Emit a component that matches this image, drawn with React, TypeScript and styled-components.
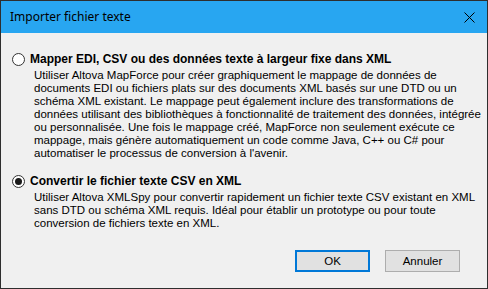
import React from "react";
import styled, { createGlobalStyle } from "styled-components";

const Global = createGlobalStyle`
  html, body { margin: 0; padding: 0; background: #ffffff; }
  * { box-sizing: border-box; }
`;

const Window = styled.div`
  width: 488px;
  height: 289px;
  border: 1px solid #2e2e2e;
  background: #f0f0f0;
  display: flex;
  flex-direction: column;
  overflow: hidden;
`;

const TitleBar = styled.div`
  height: 32px;
  background: #28a6f1;
  display: flex;
  align-items: center;
  justify-content: space-between;
  padding: 0 12px 0 9px;
  font-family: "Noto Sans", "Open Sans", sans-serif;
  font-size: 12px;
  color: #000;
`;

const Title = styled.span`
  line-height: 1;
`;

const Body = styled.div`
  flex: 1;
  display: flex;
  flex-direction: column;
  padding: 20px 0 0 11px;
  font-family: "Liberation Sans", Arial, sans-serif;
  color: #000;
`;

const Option = styled.div<{ $gap: number }>`
  display: flex;
  flex-direction: column;
  margin-bottom: ${(p) => p.$gap}px;
`;

const OptionRow = styled.label`
  display: flex;
  align-items: center;
  gap: 5px;
  height: 13px;
`;

const Radio = styled.span<{ $checked?: boolean }>`
  width: 13px;
  height: 13px;
  border-radius: 50%;
  border: 1px solid #333333;
  background: #ffffff;
  display: flex;
  align-items: center;
  justify-content: center;
  flex: none;
  &::after {
    content: "";
    width: 7px;
    height: 7px;
    border-radius: 50%;
    background: ${(p) => (p.$checked ? "#1a1a1a" : "transparent")};
  }
`;

const Heading = styled.span`
  font-weight: bold;
  font-size: 12px;
  line-height: 13px;
  white-space: nowrap;
`;

const Desc = styled.p`
  margin: 3px 0 0 22px;
  font-size: 11.5px;
  line-height: 13px;
  white-space: nowrap;
`;

const Footer = styled.div`
  display: flex;
  justify-content: flex-end;
  gap: 15px;
  padding-right: 27px;
  margin-top: auto;
  margin-bottom: 16px;
`;

const Button = styled.button<{ $default?: boolean }>`
  width: 75px;
  height: 22px;
  background: #e1e1e1;
  border: ${(p) => (p.$default ? "2px solid #0078d7" : "1px solid #adadad")};
  font-family: "Liberation Sans", Arial, sans-serif;
  font-size: 11.5px;
  color: #000;
  padding: 0;
`;

const CloseIcon = () => (
  <svg width="11" height="11" viewBox="0 0 11 11" fill="none">
    <path d="M0.5 0.5 L10.5 10.5 M10.5 0.5 L0.5 10.5" stroke="#000" strokeWidth="1" />
  </svg>
);

const lines1 = [
  "Utiliser Altova MapForce pour créer graphiquement le mappage de données de",
  "documents EDI ou fichiers plats sur des documents XML basés sur une DTD ou un",
  "schéma XML existant. Le mappage peut également inclure des transformations de",
  "données utilisant des bibliothèques à fonctionnalité de traitement des données, intégrée",
  "ou personnalisée. Une fois le mappage créé, MapForce non seulement exécute ce",
  "mappage, mais génère automatiquement un code comme Java, C++ ou C# pour",
  "automatiser le processus de conversion à l'avenir.",
];

const lines2 = [
  "Utiliser Altova XMLSpy pour convertir rapidement un fichier texte CSV existant en XML",
  "sans DTD ou schéma XML requis. Idéal pour établir un prototype ou pour toute",
  "conversion de fichiers texte en XML.",
];

const Lines = ({ items }: { items: string[] }) => (
  <>
    {items.map((l, i) => (
      <React.Fragment key={i}>
        {l}
        {i < items.length - 1 && <br />}
      </React.Fragment>
    ))}
  </>
);

export default function App() {
  return (
    <>
      <Global />
      <Window>
        <TitleBar>
          <Title>Importer fichier texte</Title>
          <CloseIcon />
        </TitleBar>
        <Body>
          <Option $gap={15}>
            <OptionRow>
              <Radio />
              <Heading>Mapper EDI, CSV ou des données texte à largeur fixe dans XML</Heading>
            </OptionRow>
            <Desc>
              <Lines items={lines1} />
            </Desc>
          </Option>
          <Option $gap={0}>
            <OptionRow>
              <Radio $checked />
              <Heading>Convertir le fichier texte CSV en XML</Heading>
            </OptionRow>
            <Desc>
              <Lines items={lines2} />
            </Desc>
          </Option>
          <Footer>
            <Button $default>OK</Button>
            <Button>Annuler</Button>
          </Footer>
        </Body>
      </Window>
    </>
  );
}
